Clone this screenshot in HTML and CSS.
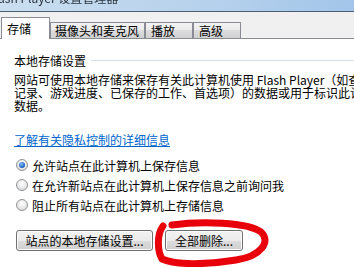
FILE: index.html
```html
<html>
	<head>
		<title>Flash Player 设置管理器</title>
		<link rel="stylesheet" href="styles.css">
	</head>
	<body>
		<div class="window">
			<div class="titlebar"><span class="title">Flash Player 设置管理器</span></div>
			<ul class="tabs">
				<li class="tab active">存储</li>
				<li class="tab wide">摄像头和麦克风</li>
				<li class="tab">播放</li>
				<li class="tab">高级</li>
			</ul>
			<div class="panel">
				<div class="group"><span>本地存储设置</span><span class="rule"></span></div>
				<p class="desc">网站可使用本地存储来保存有关此计算机使用 Flash Player（如查看<br>记录、游戏进度、已保存的工作、首选项）的数据或用于标识此计算机的<br>数据。</p>
				<a class="link" href="#">了解有关隐私控制的详细信息</a>
				<ul class="options">
					<li><span class="radio checked"></span>允许站点在此计算机上保存信息</li>
					<li><span class="radio"></span>在允许新站点在此计算机上保存信息之前询问我</li>
					<li><span class="radio"></span>阻止所有站点在此计算机上存储信息</li>
				</ul>
				<div class="buttons">
					<button class="btn site">站点的本地存储设置...</button>
					<button class="btn clear">全部删除...</button>
				</div>
			</div>
			<!-- hand-drawn red loop over the delete button -->
			<svg class="mark" width="354" height="267" viewBox="0 0 354 267">
				<path d="M172 225 C200 221 248 222 261 232 C271 241 262 256 236 260 C205 265 175 265 162 259 C157 250 157 234 163 226" />
			</svg>
		</div>
	</body>
</html>
```

FILE: styles.css
```css
body {
	margin: 0;
	width: 354px;
	height: 267px;
	overflow: hidden;
	background: #fff;
	color: #000;
	font-family: "Noto Sans CJK SC", "Noto Sans", sans-serif;
	font-size: 12px;
}
.window {
	position: relative;
	height: 267px;
}
.titlebar {
	height: 11px;
	overflow: hidden;
	background: linear-gradient(to right, #cadeef, #b6d1ec 60%, #a2c5e9);
	border-bottom: 1px solid #4b5e74;
}
.title {
	display: block;
	margin: -9px 0 0 -12px;
	line-height: 14px;
	white-space: nowrap;
	color: #2b3440;
	filter: blur(0.5px);
}
.tabs {
	list-style: none;
	margin: 0;
	padding: 0 0 0 1px;
	height: 26px;
	display: flex;
	align-items: flex-end;
	background: #f0f0f0;
	border-bottom: 1px solid #898c95;
}
.tab {
	box-sizing: border-box;
	width: 48px;
	height: 16px;
	line-height: 15px;
	padding: 0 0 0 5px;
	border: 1px solid #898c95;
	border-bottom: none;
	background: linear-gradient(#f3f3f3, #ebebeb 45%, #dcdcdc 50%, #d2d2d2);
	white-space: nowrap;
}
.tab.wide {
	width: 95px;
	padding-left: 4px;
}
.tab.active {
	width: 49px;
	height: 22px;
	margin-bottom: -1px;
	padding: 4px 0 0 5px;
	line-height: 14px;
	background: #fff;
}
.panel {
	padding: 0 0 0 14px;
}
.group {
	display: flex;
	align-items: center;
	margin-top: 15px;
	line-height: 13px;
}
.rule {
	flex: 1;
	height: 1px;
	margin-left: 5px;
	background: #d5dfe5;
}
.desc {
	margin: 6px 0 0;
	line-height: 13px;
	white-space: nowrap;
}
.link {
	display: inline-block;
	margin-top: 21px;
	line-height: 13px;
	color: #0066cc;
	text-decoration: underline;
}
.options {
	list-style: none;
	margin: 9px 0 0;
	padding: 0;
}
.options li {
	display: flex;
	align-items: center;
	height: 20px;
	white-space: nowrap;
}
.radio {
	box-sizing: border-box;
	position: relative;
	width: 12px;
	height: 12px;
	margin: 0 4px 0 2px;
	border: 1px solid #8f9295;
	border-radius: 50%;
	background: radial-gradient(circle at 50% 35%, #fff, #e6e6e6 60%, #cfcfcf);
}
.radio.checked::after {
	content: "";
	position: absolute;
	left: 2px;
	top: 2px;
	width: 6px;
	height: 6px;
	border-radius: 50%;
	background: radial-gradient(circle at 40% 35%, #8fc2f5, #2a6fd0 55%, #0d3f8f);
}
.buttons {
	display: flex;
	margin: 15px 0 0 2px;
}
.btn {
	box-sizing: border-box;
	height: 21px;
	padding: 0;
	font-family: "Noto Sans CJK SC", "Noto Sans", sans-serif;
	font-size: 12px;
	line-height: 17px;
	color: #000;
	border: 1px solid #707070;
	border-radius: 3px;
	background: linear-gradient(#f2f2f2, #ebebeb 50%, #dddddd 50%, #cfcfcf);
	box-shadow: inset 0 0 0 1px #fbfbfb;
}
.btn.site {
	width: 137px;
}
.btn.clear {
	width: 78px;
	margin-left: 12px;
}
.mark {
	position: absolute;
	left: 0;
	top: 0;
	pointer-events: none;
}
.mark path {
	fill: none;
	stroke: #e8000b;
	stroke-width: 7;
	stroke-linecap: round;
	stroke-linejoin: round;
}
```
